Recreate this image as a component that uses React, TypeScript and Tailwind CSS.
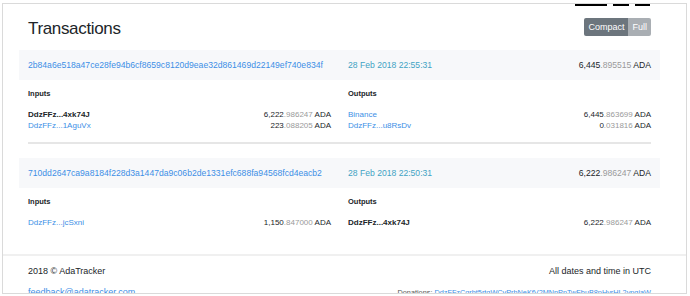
import React from "react";

type Line = { addr: string; amount: string; link?: boolean };

const Amount = ({ value }: { value: string }) => {
  const [whole, dec] = value.split(".");
  return (
    <span className="text-[#212529]">
      {whole}
      <span className="text-[#9a9a9a]">.{dec}</span> ADA
    </span>
  );
};

const Lines = ({ title, lines }: { title: string; lines: Line[] }) => (
  <div>
    <div className="mt-[9px] h-[10px] leading-[10px] text-[7.5px] font-bold text-[#212529]">
      {title}
    </div>
    <div className="mt-[10px]">
      {lines.map((l, i) => (
        <div key={i} className="flex justify-between text-[8px] leading-[11px]">
          <span
            className={l.link ? "text-[#3d8fe6]" : "font-bold text-[#212529]"}
          >
            {l.addr}
          </span>
          <Amount value={l.amount} />
        </div>
      ))}
    </div>
  </div>
);

const Tx = ({
  hash,
  date,
  total,
  inputs,
  outputs,
}: {
  hash: string;
  date: string;
  total: string;
  inputs: Line[];
  outputs: Line[];
}) => (
  <div>
    <div className="h-[30px] bg-[#f7f8fa] px-[9px] grid grid-cols-2 gap-x-[17px] items-center text-[8.6px]">
      <span className="text-[#3d8fe6]">{hash}</span>
      <div className="flex justify-between">
        <span className="text-[#3fa3c4]">{date}</span>
        <Amount value={total} />
      </div>
    </div>
    <div className="px-[9px] grid grid-cols-2 gap-x-[17px]">
      <Lines title="Inputs" lines={inputs} />
      <Lines title="Outputs" lines={outputs} />
    </div>
  </div>
);

export default function App() {
  return (
    <div
      className="w-[690px] h-[296px] bg-white overflow-hidden pt-[3px] pl-[2px]"
      style={{ fontFamily: '"Liberation Sans", Arial, sans-serif' }}
    >
      <div className="relative w-[685px] h-[291px] border border-[#dadada] overflow-hidden">
        {/* bottom edge of the page header, cut off by the frame */}
        <div className="absolute right-[36px] top-[-1px] h-[3px] overflow-hidden">
          <div className="flex gap-[6px] items-end h-[3px]">
            <span className="block w-[32px] h-[3px] bg-black" />
            <span className="block w-[16px] h-[3px] bg-black" />
            <span className="block w-[15px] h-[3px] bg-black" />
          </div>
        </div>
        <div className="ml-[16px] w-[641px]">
          <div className="h-[46px] px-[9px] flex items-center justify-between">
            <h1 className="text-[17px] tracking-[-0.02em] text-[#212529] mt-[3px]">
              Transactions
            </h1>
            <div className="flex rounded-[2px] overflow-hidden text-[9px] text-white font-medium h-[18px]">
              <span className="bg-[#6c757d] px-[4px] leading-[18px]">Compact</span>
              <span className="bg-[#a9aeb3] px-[4px] leading-[18px]">Full</span>
            </div>
          </div>
          <Tx
            hash="2b84a6e518a47ce28fe94b6cf8659c8120d9eae32d861469d22149ef740e834f"
            date="28 Feb 2018 22:55:31"
            total="6,445.895515"
            inputs={[
              { addr: "DdzFFz...4xk74J", amount: "6,222.986247" },
              { addr: "DdzFFz...1AguVx", amount: "223.088205", link: true },
            ]}
            outputs={[
              { addr: "Binance", amount: "6,445.863699", link: true },
              { addr: "DdzFFz...u8RsDv", amount: "0.031816", link: true },
            ]}
          />
          <div className="mx-[9px] mt-[11px] h-[2px] bg-[#e6e6e6]" />
          <div className="mt-[14px]">
            <Tx
              hash="710dd2647ca9a8184f228d3a1447da9c06b2de1331efc688fa94568fcd4eacb2"
              date="28 Feb 2018 22:50:31"
              total="6,222.986247"
              inputs={[
                { addr: "DdzFFz...jcSxni", amount: "1,150.847000", link: true },
              ]}
              outputs={[{ addr: "DdzFFz...4xk74J", amount: "6,222.986247" }]}
            />
          </div>
        </div>
        <div className="mt-[26px] border-t-2 border-[#f0f0f0]">
          <div className="ml-[25px] w-[623px]">
            <div className="flex justify-between pt-[9px] text-[9px] leading-[12px] text-[#212529]">
              <span>2018 © AdaTracker</span>
              <span>All dates and time in UTC</span>
            </div>
            <div className="flex justify-between items-baseline mt-[9px]">
              <span className="text-[9px] text-[#3d8fe6]">feedback@adatracker.com</span>
              <span className="text-[7.3px] text-[#555]">
                Donations:{" "}
                <span className="text-[#3d8fe6]">
                  DdzFFzCqrht5rtqWCyPrhNeKfV2MNnPpTwFbuB8pHyrHL2ypgjaW
                </span>
              </span>
            </div>
          </div>
        </div>
      </div>
    </div>
  );
}
